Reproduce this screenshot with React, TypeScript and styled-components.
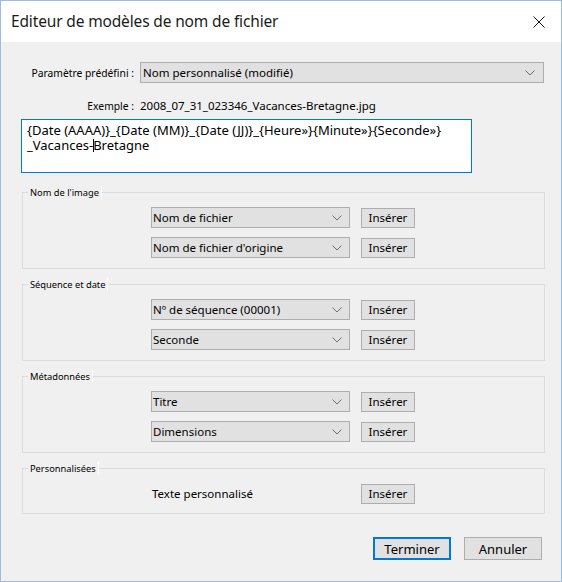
import React from 'react';
import styled, { createGlobalStyle } from 'styled-components';

const GlobalStyle = createGlobalStyle`
  html, body {
    margin: 0;
    padding: 0;
    background: #f0f0f0;
  }
  body {
    font-family: "Noto Sans", "Open Sans", sans-serif;
    color: #000;
  }
`;

const Window = styled.div`
  width: 562px;
  height: 582px;
  box-sizing: border-box;
  border: 1px solid #9fbbdb;
  display: flex;
  flex-direction: column;
  background: #f0f0f0;
`;

const TitleBar = styled.div`
  height: 41px;
  flex-shrink: 0;
  background: #fff;
  display: flex;
  align-items: center;
  justify-content: space-between;
  padding: 0 16px 0 10px;
`;

const Title = styled.div`
  font-size: 15.5px;
  letter-spacing: -0.15px;
  color: #1b1b1b;
  margin-top: -1px;
`;

const CloseButton = styled.button`
  width: 12px;
  height: 12px;
  padding: 0;
  border: none;
  background: transparent;
  display: flex;
  margin-top: 1px;
`;

const Body = styled.div`
  flex: 1;
  display: flex;
  flex-direction: column;
  padding: 20px 17px 21px 20px;
  font-size: 11.5px;
`;

const FormRow = styled.div<{ $top?: number }>`
  display: flex;
  align-items: center;
  gap: 6px;
  margin-top: ${(p) => p.$top ?? 0}px;
  line-height: 16px;
`;

const FieldLabel = styled.span`
  width: 113px;
  flex-shrink: 0;
  text-align: right;
  white-space: nowrap;
  font-size: 10.3px;
`;

const Select = styled.div<{ $width?: number; $chevronPad?: number; $textPad?: number }>`
  width: ${(p) => (p.$width ? `${p.$width}px` : 'auto')};
  flex: ${(p) => (p.$width ? '0 0 auto' : '1')};
  height: 21px;
  box-sizing: border-box;
  border: 1px solid #adadad;
  background: #e1e1e1;
  display: flex;
  align-items: center;
  justify-content: space-between;
  padding: 0 ${(p) => p.$chevronPad ?? 7}px 0 ${(p) => p.$textPad ?? 1}px;
  white-space: nowrap;
`;

const Editor = styled.div`
  position: relative;
  margin-top: 5px;
  width: 451px;
  height: 54px;
  box-sizing: border-box;
  border: 1px solid #0078d7;
  background: #fff;
  padding: 3px 5px 0;
  font-size: 13px;
  line-height: 15px;
  white-space: pre;
`;

// text caret, drawn over the second line between "-" and "B"
const Caret = styled.span`
  position: absolute;
  left: 71px;
  top: 19px;
  width: 1px;
  height: 13px;
  background: #000;
`;

const Groups = styled.div`
  display: flex;
  flex-direction: column;
  gap: 9px;
  margin-top: 13px;
`;

const Group = styled.fieldset`
  margin: 0 0 0 1px;
  padding: 0;
  border: 1px solid #dcdcdc;
  min-width: 0;
  width: 523px;
  box-sizing: border-box;
`;

const Legend = styled.legend`
  margin-left: 5px;
  padding: 0 2px;
  font-size: 9.3px;
  line-height: 13px;
  background: #f0f0f0;
  border-right: 1px solid #fff;
  color: #000;
`;

const GroupBody = styled.div<{ $bottom?: number }>`
  display: flex;
  flex-direction: column;
  gap: 9px;
  padding: 8px 0 ${(p) => p.$bottom ?? 10}px 128px;
`;

const GroupRow = styled.div`
  display: flex;
  align-items: center;
  gap: 11px;
  height: 21px;
`;

const PlainText = styled.span`
  width: 199px;
  padding-left: 1px;
  box-sizing: border-box;
`;

const SmallButton = styled.button`
  width: 54px;
  height: 20px;
  box-sizing: border-box;
  border: 1px solid #adadad;
  background: #e1e1e1;
  font-family: inherit;
  font-size: 11.5px;
  color: #000;
  padding: 0;
`;

const Footer = styled.div`
  margin-top: auto;
  display: flex;
  justify-content: flex-end;
  gap: 13px;
  padding-right: 2px;
`;

const DialogButton = styled.button<{ $primary?: boolean }>`
  width: 78px;
  height: 23px;
  box-sizing: border-box;
  border: ${(p) => (p.$primary ? '2px solid #0078d7' : '1px solid #adadad')};
  background: #e1e1e1;
  font-family: inherit;
  font-size: 13px;
  color: #000;
  padding: 0;
`;

const Chevron = () => (
  <svg width="10" height="6" viewBox="0 0 10 6">
    <polyline points="0.5,0.5 5,5 9.5,0.5" fill="none" stroke="#6d6d6d" strokeWidth="1" />
  </svg>
);

const CloseIcon = () => (
  <svg width="12" height="12" viewBox="0 0 12 12">
    <path d="M0.5 0.5 L11.5 11.5 M11.5 0.5 L0.5 11.5" stroke="#111" strokeWidth="1" />
  </svg>
);

type TokenRow = { kind: 'select'; value: string } | { kind: 'text'; value: string };

const groups: { title: string; rows: TokenRow[]; bottom?: number }[] = [
  {
    title: "Nom de l'image",
    rows: [
      { kind: 'select', value: 'Nom de fichier' },
      { kind: 'select', value: "Nom de fichier d'origine" },
    ],
  },
  {
    title: 'Séquence et date',
    rows: [
      { kind: 'select', value: 'Nº de séquence (00001)' },
      { kind: 'select', value: 'Seconde' },
    ],
  },
  {
    title: 'Métadonnées',
    rows: [
      { kind: 'select', value: 'Titre' },
      { kind: 'select', value: 'Dimensions' },
    ],
  },
  {
    title: 'Personnalisées',
    rows: [{ kind: 'text', value: 'Texte personnalisé' }],
    bottom: 9,
  },
];

const App: React.FC = () => {
  return (
    <>
      <GlobalStyle />
      <Window>
        <TitleBar>
          <Title>Editeur de modèles de nom de fichier</Title>
          <CloseButton aria-label="Fermer">
            <CloseIcon />
          </CloseButton>
        </TitleBar>
        <Body>
          <FormRow>
            <FieldLabel>Paramètre prédéfini :</FieldLabel>
            <Select $textPad={2} $chevronPad={8}>
              <span>Nom personnalisé (modifié)</span>
              <Chevron />
            </Select>
          </FormRow>
          <FormRow $top={15}>
            <FieldLabel>Exemple :</FieldLabel>
            <span>2008_07_31_023346_Vacances-Bretagne.jpg</span>
          </FormRow>
          <Editor>
            {'{Date (AAAA)}_{Date (MM)}_{Date (JJ)}_{Heure»}{Minute»}{Seconde»}\n_Vacances-Bretagne'}
            <Caret />
          </Editor>
          <Groups>
            {groups.map((g) => (
              <Group key={g.title}>
                <Legend>{g.title}</Legend>
                <GroupBody $bottom={g.bottom}>
                  {g.rows.map((r) => (
                    <GroupRow key={r.value}>
                      {r.kind === 'select' ? (
                        <Select $width={199}>
                          <span>{r.value}</span>
                          <Chevron />
                        </Select>
                      ) : (
                        <PlainText>{r.value}</PlainText>
                      )}
                      <SmallButton>Insérer</SmallButton>
                    </GroupRow>
                  ))}
                </GroupBody>
              </Group>
            ))}
          </Groups>
          <Footer>
            <DialogButton $primary>Terminer</DialogButton>
            <DialogButton>Annuler</DialogButton>
          </Footer>
        </Body>
      </Window>
    </>
  );
};

export default App;
